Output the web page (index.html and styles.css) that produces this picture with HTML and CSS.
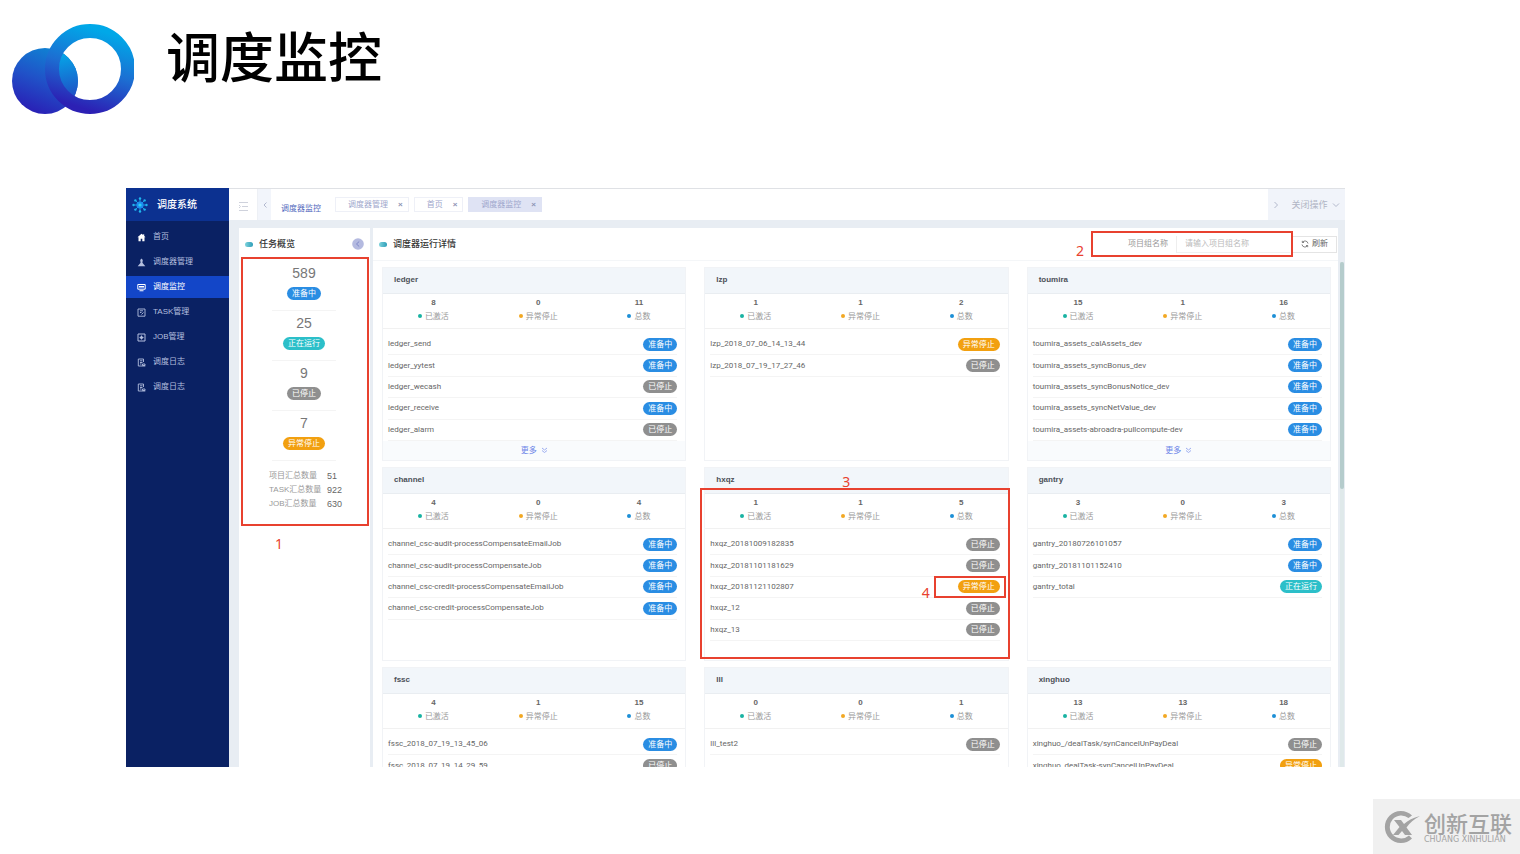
FILE: index.html
```html
<!DOCTYPE html>
<html lang="zh-CN">
<head>
<meta charset="utf-8">
<title>调度监控</title>
<link rel="stylesheet" href="styles.css">
</head>
<body>
<header class="slide-head">
  <svg class="logo" viewBox="0 0 122 90" width="122" height="90" aria-hidden="true">
    <defs>
      <linearGradient id="ring" x1="0.65" y1="0" x2="0.35" y2="1"><stop offset="0" stop-color="#00a8e8"/><stop offset="0.5" stop-color="#1c6ed2"/><stop offset="1" stop-color="#2c20b4"/></linearGradient>
      <linearGradient id="ball" x1="0.7" y1="0" x2="0.3" y2="1"><stop offset="0" stop-color="#0e86d4"/><stop offset="0.5" stop-color="#2052c8"/><stop offset="1" stop-color="#2a1cb4"/></linearGradient>
      <linearGradient id="inner" x1="0.3" y1="0" x2="0.5" y2="1"><stop offset="0.2" stop-color="#06a2e6"/><stop offset="1" stop-color="#2638bc"/></linearGradient>
      <clipPath id="hole"><circle cx="78" cy="45" r="32"/></clipPath>
    </defs>
    <circle cx="33" cy="57" r="33" fill="url(#ball)"/>
    <circle cx="33" cy="57" r="33" fill="url(#inner)" clip-path="url(#hole)"/>
    <circle cx="78" cy="45" r="38" fill="none" stroke="url(#ring)" stroke-width="14"/>
  </svg>
  <h1 class="slide-title">调度监控</h1>
</header>

<main class="app">
  <nav class="side">
    <div class="brand">
      <svg width="16" height="16" viewBox="0 0 16 16" aria-hidden="true"><g stroke="#1fa6ea" stroke-width=".9"><path d="M8 8V1.500M8 8v6.500M8 8H1.500M8 8h6.500M8 8 3.400 3.400M8 8l4.600-4.600M8 8l-4.600 4.600M8 8l4.600 4.600"/></g><g fill="#1fb6ee"><circle cx="8" cy="1.500" r="1.200"/><circle cx="8" cy="14.500" r="1.200"/><circle cx="1.500" cy="8" r="1.200"/><circle cx="14.500" cy="8" r="1.200"/><circle cx="3.400" cy="3.400" r="1.200"/><circle cx="12.600" cy="3.400" r="1.200"/><circle cx="3.400" cy="12.600" r="1.200"/><circle cx="12.600" cy="12.600" r="1.200"/></g><circle cx="8" cy="8" r="3.600" fill="#1c8df0"/><circle cx="8" cy="8" r="1.600" fill="#29d3f5"/></svg>
      <span>调度系统</span>
    </div>
    <div class="menu">
      <a class="item" href="#"><svg class="mi" viewBox="0 0 9 9"><path d="M4.500.7.500 4.200h1V8.200h2.200V5.800h1.600v2.400h2.200v-4h1L7.200 3V1.200H6.200v.9z" fill="#fff"/></svg>首页</a>
      <a class="item" href="#"><svg class="mi" viewBox="0 0 9 9"><path d="M4.500.5 5.800 2 5.400 4.800 8.300 8.200H.7L3.600 4.800 3.200 2z" fill="currentColor"/></svg>调度器管理</a>
      <a class="item active" href="#"><svg class="mi" viewBox="0 0 9 9"><path d="M.8 1.500h7.400v4.700H.8z" fill="none" stroke="currentColor"/><path d="M2 3h5v1.500H2zM2.500 7.200h4v1h-4z" fill="currentColor"/></svg>调度监控</a>
      <a class="item" href="#"><svg class="mi" viewBox="0 0 9 9"><path d="M1 1h7v7.200H1zM3 2.800h3M3 4.500h1.500M4.500 6.500l2-2" fill="none" stroke="currentColor" stroke-width=".9"/></svg>TASK管理</a>
      <a class="item" href="#"><svg class="mi" viewBox="0 0 9 9"><path d="M1 1h7v7H1zM4.500 2.500v4M2.500 4.500h4" fill="none" stroke="currentColor" stroke-width="1"/><circle cx="4.500" cy="4.500" r="1.500" fill="currentColor"/></svg>JOB管理</a>
      <a class="item" href="#"><svg class="mi" viewBox="0 0 9 9"><path d="M1.300 8V1h5.200v3M3 2.800h2.500M3 4.500h2.500M3 6h1.500M1.300 8h7M5.500 6h2.500v1.500H5.500z" fill="none" stroke="currentColor" stroke-width=".9"/></svg>调度日志</a>
      <a class="item" href="#"><svg class="mi" viewBox="0 0 9 9"><path d="M1.300 8V1h5.200v3M3 2.800h2.500M3 4.500h2.500M3 6h1.500M1.300 8h7M5.500 6h2.500v1.500H5.500z" fill="none" stroke="currentColor" stroke-width=".9"/></svg>调度日志</a>
    </div>
  </nav>

  <div class="work">
    <div class="topbar">
      <button class="fold" aria-label="折叠菜单"><svg width="11" height="11" viewBox="0 0 11 11"><path d="M1 1.500h9M4 5.500h6M1 9.500h9M1 4l1.500 1.500L1 7" fill="none" stroke="#cfd2dc"/></svg></button>
      <button class="prev" aria-label="向前"><svg width="6" height="8" viewBox="0 0 6 8"><path d="M4.500 1.500 2 4l2.500 2.500" fill="none" stroke="#b3b9cf"/></svg></button>
      <span class="crumb">调度器监控</span>
      <div class="tabs">
        <a class="tab" href="#">调度器管理<b class="x">×</b></a>
        <a class="tab" href="#">首页<b class="x">×</b></a>
        <a class="tab on" href="#">调度器监控<b class="x">×</b></a>
      </div>
      <button class="ops"><svg width="6" height="8" viewBox="0 0 6 8"><path d="M1.500 1 4.500 4l-3 3" fill="none" stroke="#b3b9cc"/></svg><span>关闭操作</span><svg width="8" height="6" viewBox="0 0 8 6"><path d="M1 1.500 4 4.500l3-3" fill="none" stroke="#b3b9cc"/></svg></button>
    </div>

    <div class="content">
      <section class="panel overview">
        <div class="panel-head"><i class="pill"></i><h2>任务概览</h2><button class="close-side" aria-label="收起"><svg width="12" height="12" viewBox="0 0 12 12"><circle cx="6" cy="6" r="5.800" fill="#b4bae0"/><path d="M7.200 3.500 4.500 6l2.700 2.500" fill="none" stroke="#7f88c8"/></svg></button></div>
        <div class="summary">
          <div class="sum"><strong>589</strong><span class="tag blue">准备中</span></div>
          <div class="sum"><strong>25</strong><span class="tag teal">正在运行</span></div>
          <div class="sum"><strong>9</strong><span class="tag gray">已停止</span></div>
          <div class="sum"><strong>7</strong><span class="tag amber">异常停止</span></div>
          <dl class="totals"><dt>项目汇总数量</dt><dd>51</dd><dt>TASK汇总数量</dt><dd>922</dd><dt>JOB汇总数量</dt><dd>630</dd></dl>
          <span class="mark mark-1">1</span>
        </div>
      </section>

      <section class="panel detail">
        <div class="panel-head">
          <i class="pill"></i><h2>调度器运行详情</h2>
          <form class="search">
            <label for="group">项目组名称</label>
            <input id="group" type="text" placeholder="请输入项目组名称">
            <span class="mark mark-2">2</span>
          </form>
          <button class="refresh"><svg width="8" height="8" viewBox="0 0 8 8"><path d="M1 4.500a3 3 0 0 0 5.400 1.300M7 3.500A3 3 0 0 0 1.600 2.200M1.300.8v1.700H3M6.700 7.200V5.500H5" fill="none" stroke="#666" stroke-width=".8"/></svg>刷新</button>
        </div>
        <div class="cards">
          <article class="card">
            <h3>ledger</h3>
            <div class="stats"><div><b>8</b><span class="s green">已激活</span></div><div><b>0</b><span class="s orange">异常停止</span></div><div><b>11</b><span class="s azure">总数</span></div></div>
            <ul class="jobs"><li>ledger_send<span class="tag blue">准备中</span></li><li>ledger_yytest<span class="tag blue">准备中</span></li><li>ledger_wecash<span class="tag gray">已停止</span></li><li>ledger_receive<span class="tag blue">准备中</span></li><li>ledger_alarm<span class="tag gray">已停止</span></li></ul>
            <a class="more" href="#">更多<svg width="7" height="7" viewBox="0 0 7 7"><path d="M1 1l2.500 2L6 1M1 3.500l2.500 2 2.500-2" fill="none" stroke="#93a5ee" stroke-width=".9"/></svg></a>
          </article>
          <article class="card">
            <h3>lzp</h3>
            <div class="stats"><div><b>1</b><span class="s green">已激活</span></div><div><b>1</b><span class="s orange">异常停止</span></div><div><b>2</b><span class="s azure">总数</span></div></div>
            <ul class="jobs"><li>lzp_2018_07_06_14_13_44<span class="tag amber">异常停止</span></li><li>lzp_2018_07_19_17_27_46<span class="tag gray">已停止</span></li></ul>
          </article>
          <article class="card">
            <h3>toumira</h3>
            <div class="stats"><div><b>15</b><span class="s green">已激活</span></div><div><b>1</b><span class="s orange">异常停止</span></div><div><b>16</b><span class="s azure">总数</span></div></div>
            <ul class="jobs"><li>toumira_assets_calAssets_dev<span class="tag blue">准备中</span></li><li>toumira_assets_syncBonus_dev<span class="tag blue">准备中</span></li><li>toumira_assets_syncBonusNotice_dev<span class="tag blue">准备中</span></li><li>toumira_assets_syncNetValue_dev<span class="tag blue">准备中</span></li><li>toumira_assets-abroadra-pullcompute-dev<span class="tag blue">准备中</span></li></ul>
            <a class="more" href="#">更多<svg width="7" height="7" viewBox="0 0 7 7"><path d="M1 1l2.500 2L6 1M1 3.500l2.500 2 2.500-2" fill="none" stroke="#93a5ee" stroke-width=".9"/></svg></a>
          </article>

          <article class="card">
            <h3>channel</h3>
            <div class="stats"><div><b>4</b><span class="s green">已激活</span></div><div><b>0</b><span class="s orange">异常停止</span></div><div><b>4</b><span class="s azure">总数</span></div></div>
            <ul class="jobs"><li>channel_csc-audit-processCompensateEmailJob<span class="tag blue">准备中</span></li><li>channel_csc-audit-processCompensateJob<span class="tag blue">准备中</span></li><li>channel_csc-credit-processCompensateEmailJob<span class="tag blue">准备中</span></li><li>channel_csc-credit-processCompensateJob<span class="tag blue">准备中</span></li></ul>
          </article>
          <article class="card marked">
            <h3>hxqz</h3>
            <div class="stats"><div><b>1</b><span class="s green">已激活</span></div><div><b>1</b><span class="s orange">异常停止</span></div><div><b>5</b><span class="s azure">总数</span></div></div>
            <ul class="jobs"><li>hxqz_20181009182835<span class="tag gray">已停止</span></li><li>hxqz_20181101181629<span class="tag gray">已停止</span></li><li class="flagged">hxqz_20181121102807<span class="tag amber">异常停止</span><span class="mark mark-4">4</span></li><li>hxqz_12<span class="tag gray">已停止</span></li><li>hxqz_13<span class="tag gray">已停止</span></li></ul>
            <span class="mark mark-3">3</span>
          </article>
          <article class="card">
            <h3>gantry</h3>
            <div class="stats"><div><b>3</b><span class="s green">已激活</span></div><div><b>0</b><span class="s orange">异常停止</span></div><div><b>3</b><span class="s azure">总数</span></div></div>
            <ul class="jobs"><li>gantry_20180726101057<span class="tag blue">准备中</span></li><li>gantry_20181101152410<span class="tag blue">准备中</span></li><li>gantry_total<span class="tag teal">正在运行</span></li></ul>
          </article>

          <article class="card">
            <h3>fssc</h3>
            <div class="stats"><div><b>4</b><span class="s green">已激活</span></div><div><b>1</b><span class="s orange">异常停止</span></div><div><b>15</b><span class="s azure">总数</span></div></div>
            <ul class="jobs"><li>fssc_2018_07_19_13_45_06<span class="tag blue">准备中</span></li><li>fssc_2018_07_19_14_29_59<span class="tag gray">已停止</span></li></ul>
          </article>
          <article class="card">
            <h3>lll</h3>
            <div class="stats"><div><b>0</b><span class="s green">已激活</span></div><div><b>0</b><span class="s orange">异常停止</span></div><div><b>1</b><span class="s azure">总数</span></div></div>
            <ul class="jobs"><li>lll_test2<span class="tag gray">已停止</span></li></ul>
          </article>
          <article class="card">
            <h3>xinghuo</h3>
            <div class="stats"><div><b>13</b><span class="s green">已激活</span></div><div><b>13</b><span class="s orange">异常停止</span></div><div><b>18</b><span class="s azure">总数</span></div></div>
            <ul class="jobs"><li>xinghuo_/dealTask/synCancelUnPayDeal<span class="tag gray">已停止</span></li><li>xinghuo_dealTask-synCancelUnPayDeal<span class="tag amber">异常停止</span></li></ul>
          </article>
        </div>
      </section>
      <div class="track"><div class="thumb"></div></div>
    </div>
  </div>
</main>

<aside class="watermark">
  <svg width="36" height="34" viewBox="0 0 36 34" aria-hidden="true"><path d="M28 5.500A16 16 0 1 0 28 28.500L25 25.500A11.500 11.500 0 1 1 24.500 8z" fill="#a3a3a3"/><path d="M10 10h7l3 4C24 10.500 29 7.500 36 6c-6 3-10.500 7-13.500 11.500L28 25h-7l-3-4L14.500 25H9l6.500-8z" fill="#a3a3a3"/></svg>
  <div><p class="wm-name">创新互联</p><p class="wm-sub">CHUANG XINHULIAN</p></div>
</aside>
</body>
</html>
```
FILE: styles.css
```css
* { box-sizing: border-box; }
body {
  margin: 0;
  height: 100vh;
  display: flex;
  flex-direction: column;
  overflow: hidden;
  position: relative;
  background: #fff;
  color: #666;
  font: 8px/12px "Liberation Sans", "Noto Sans CJK SC", sans-serif;
}
h1, h2, h3, p, ul, dl, dd { margin: 0; padding: 0; }
a { color: inherit; text-decoration: none; }
button { border: 0; padding: 0; background: none; font: inherit; color: inherit; display: flex; align-items: center; justify-content: center; }
svg { flex: none; }

.slide-head { flex: none; height: 188px; padding: 24px 12px 0; display: flex; align-items: flex-start; gap: 32px; }
.slide-title { color: #000; font: 500 54px/62px "Noto Sans CJK SC", sans-serif; }

.app { flex: 1; min-height: 0; margin: 0 175px 87px 126px; display: flex; overflow: hidden; }

.side { flex: none; width: 103px; background: #0a2163; color: #b4bfdf; }
.brand { height: 33px; padding-left: 6px; display: flex; align-items: center; gap: 9px; background: #0c3190; color: #fff; font-size: 10px; font-weight: 500; }
.menu { display: flex; flex-direction: column; gap: 3px; padding-top: 5px; }
.item { height: 22px; padding-left: 11px; display: flex; align-items: center; gap: 7px; }
.item.active { background: #1346c8; color: #fff; }
.mi { width: 9px; height: 9px; }

.work { flex: 1; min-width: 0; display: flex; flex-direction: column; background: #e8edf3; }
.topbar { flex: none; height: 32px; display: flex; background: #fff; border-top: 1px solid #dfe1e5; color: #a0a7cc; }
.fold { width: 29px; padding-top: 3px; border-right: 1px solid #edf0f5; }
.prev { width: 13px; background: #f2f5fb; }
.crumb { padding: 14px 14px 0 10px; color: #5369bd; }
.tabs { display: flex; align-items: center; gap: 5px; }
.tab { height: 15px; padding: 0 5px 0 12px; display: flex; align-items: center; gap: 10px; border: 1px solid #eef0f7; }
.tab.on { background: #dfe3f4; border-color: #dfe3f4; }
.x { color: #8d93b4; }
.ops { width: 77px; margin-left: auto; gap: 4px; background: #f1f4fa; color: #b0b5c4; font-size: 9px; }
.ops svg:first-child { margin-right: 8px; }

.content { flex: 1; min-height: 0; padding: 8px 1px 0 10px; display: flex; gap: 3px; }
.panel { background: #fff; min-width: 0; display: flex; flex-direction: column; }
.panel-head { flex: none; height: 32px; padding: 0 6px; display: flex; align-items: center; }
.panel-head h2 { color: #333; font-size: 9px; font-weight: 500; }
.pill { width: 8px; height: 5px; margin-right: 6px; border-radius: 3px; background: linear-gradient(90deg, #7fd3dc, #2d9db8); }
.overview { flex: none; width: 131px; }
.close-side { margin-left: auto; }
.summary { position: relative; margin: -3px 1px 0 2px; height: 269px; border: 2px solid #e8412f; padding: 2px 31px 0 29px; }
.sum { height: 50px; display: flex; flex-direction: column; align-items: center; gap: 5px; border-bottom: 1px solid #f4f4f4; }
.sum strong { padding-top: 3px; font-size: 14px; line-height: 18px; font-weight: 400; color: #777; }
.totals { display: grid; grid-template-columns: 58px 1fr; row-gap: 2px; padding-top: 9px; margin: 0 -4px 0 -3px; color: #999; }
.totals dd { color: #666; font-size: 9px; }

.tag { flex: none; height: 13px; padding: 0 5px; border-radius: 7px; color: #fff; font-size: 8px; line-height: 13px; }
.blue { background: #2a8de3; }
.teal { background: #2cbfc9; }
.gray { background: #8f8f8f; }
.amber { background: #f2a010; }

.detail { flex: 1; }
.search { position: relative; margin-left: auto; height: 26px; padding: 0 1px; display: flex; align-items: center; border: 2px solid #e8412f; width: 202px; justify-content: flex-end; gap: 8px; color: #999; }
.search input { width: 114px; height: 17px; padding: 0 8px; border: 0; border-left: 1px solid #eee; border-bottom: 1px solid #f1f1f1; background: #fff; color: #666; font: inherit; }
.search input::placeholder { color: #bbb; }
.refresh { width: 44px; height: 17px; margin-right: -5px; gap: 3px; border: 1px solid #e4e4e4; border-left: 0; }

.cards { flex: 1; min-height: 0; overflow: hidden; padding: 6px 7px 0 9px; display: grid; grid-template-columns: repeat(3, minmax(0, 1fr)); grid-auto-rows: 194px; gap: 6px 18px; border-top: 1px solid #f4f6f8; }
.card { position: relative; display: flex; flex-direction: column; border: 1px solid #f1f3f6; }
.card h3 { flex: none; height: 26px; padding-left: 11px; line-height: 24px; font-size: 8px; color: #4c5058; background: #f2f6fa; border-bottom: 1px solid #e9edf1; }
.stats { flex: none; height: 35px; padding-top: 3px; display: flex; justify-content: space-around; text-align: center; border-bottom: 1px solid #f1f1f1; }
.stats b, .stats span { display: block; line-height: 12px; }
.stats div { display: grid; row-gap: 2px; align-content: start; }
.s { color: #999; }
.s::before { content: ""; display: inline-block; width: 4px; height: 4px; margin: 0 3px 1px 0; border-radius: 2px; background: #1d8fd6; }
.s.green::before { background: #19b3a2; }
.s.orange::before { background: #f2a823; }
.jobs { list-style: none; height: 107px; margin-top: 5px; padding: 0 8px 0 5px; display: grid; grid-template-rows: repeat(5, 1fr); font-family: Roboto, "Noto Sans CJK SC", sans-serif; }
.jobs li { position: relative; display: flex; align-items: center; justify-content: space-between; border-bottom: 1px solid #f4f4f4; }
.more { flex: 1; display: flex; align-items: center; justify-content: center; gap: 4px; color: #6e86e8; background: #f9fbfd; }

.track { flex: none; width: 4px; margin: 34px 0 0 -1px; background: #dfe9ea; }
.thumb { height: 45%; background: #b5cccc; border-radius: 2px; }

.mark { position: absolute; color: #e8412f; font: 14px/16px "Noto Sans", sans-serif; }
.mark-1 { left: 32px; bottom: -28px; }
.mark-2 { left: -17px; top: 10px; }
.mark-3 { left: 137px; top: 6px; }
.mark-4 { right: 70px; top: 8px; }
.marked::after { content: ""; position: absolute; inset: 20px -2px 1px -5px; border: 2px solid #e8412f; }
.flagged::after { content: ""; position: absolute; inset: -1px -6px -1px auto; width: 68px; border: 2px solid #e8412f; }

.watermark { position: absolute; right: 0; bottom: 0; width: 147px; height: 55px; padding-left: 11px; display: flex; align-items: center; gap: 4px; background: #f0f0f0; color: #a3a3a3; }
.wm-name { font: 500 22px/26px "Noto Sans CJK SC", sans-serif; }
.wm-sub { font: 8px/10px "DejaVu Sans", sans-serif; white-space: nowrap; }
```
